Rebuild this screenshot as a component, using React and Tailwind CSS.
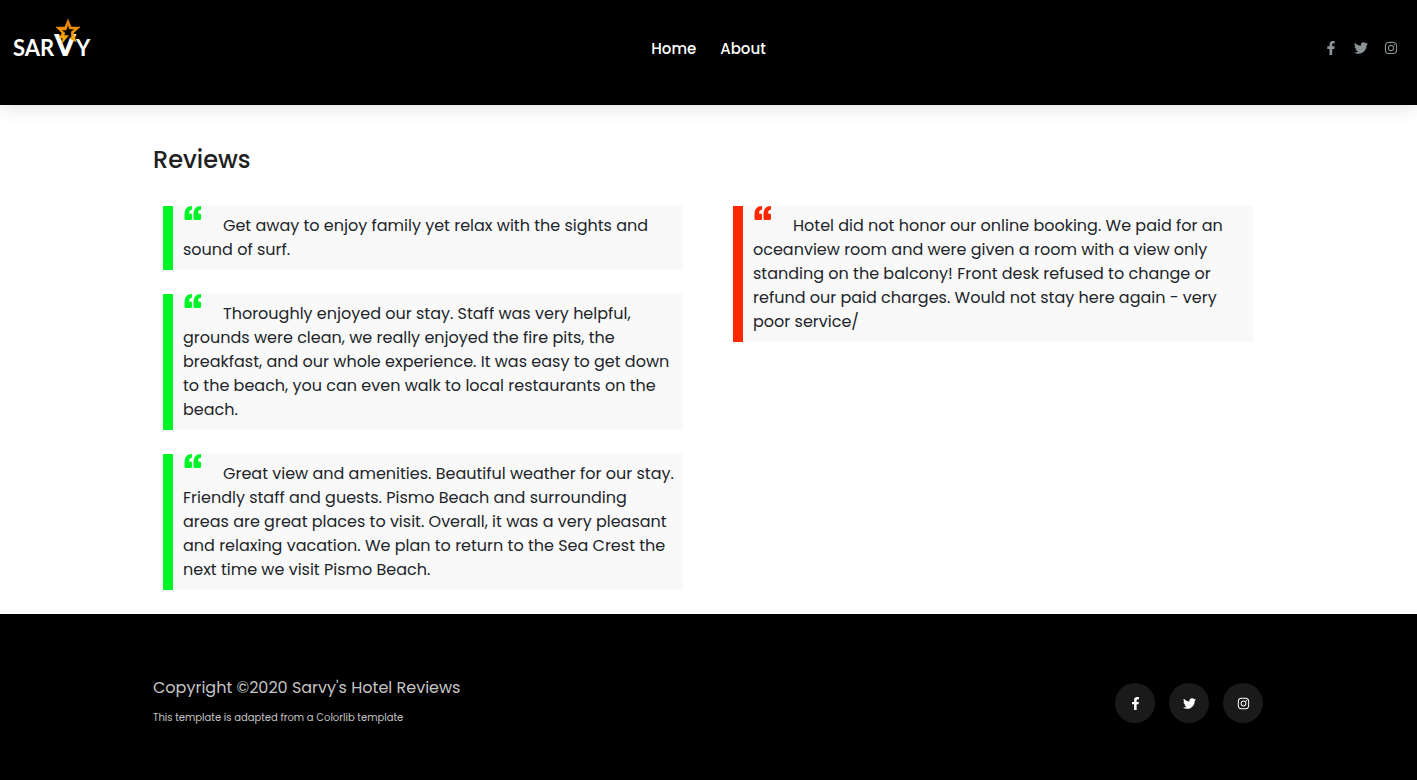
import React from "react";
import { FaFacebookF, FaTwitter, FaInstagram } from "react-icons/fa";

const good = [
  "Get away to enjoy family yet relax with the sights and sound of surf.",
  "Thoroughly enjoyed our stay. Staff was very helpful, grounds were clean, we really enjoyed the fire pits, the breakfast, and our whole experience. It was easy to get down to the beach, you can even walk to local restaurants on the beach.",
  "Great view and amenities. Beautiful weather for our stay. Friendly staff and guests. Pismo Beach and surrounding areas are great places to visit. Overall, it was a very pleasant and relaxing vacation. We plan to return to the Sea Crest the next time we visit Pismo Beach.",
];
const bad = [
  "Hotel did not honor our online booking. We paid for an oceanview room and were given a room with a view only standing on the balcony! Front desk refused to change or refund our paid charges. Would not stay here again - very poor service/",
];

const socials = [
  { name: "Facebook", Icon: FaFacebookF },
  { name: "Twitter", Icon: FaTwitter },
  { name: "Instagram", Icon: FaInstagram },
];

function Logo() {
  return (
    <svg width="84" height="60" viewBox="0 0 84 60" role="img" aria-label="Sarvy">
      <defs>
        <linearGradient id="star" x1="0" y1="0" x2="0" y2="1">
          <stop offset="0" stopColor="#e87a00" />
          <stop offset="1" stopColor="#ffb400" />
        </linearGradient>
      </defs>
      <text x="1" y="38" fill="#fff" fontFamily="Lato, sans-serif" fontSize="22" fontWeight="700">
        SAR<tspan fontSize="31" fontWeight="900">V</tspan>Y
      </text>
      <path d="M56 6l2 6h6l-5 4 2 6-5-3-4 3 1-6-4-4h5z" fill="#000" />
      <path
        d="M56 1l3.200 8H68l-6.500 6 2.500 9-6-4 1-1.500 1.500 1-1.500-5.500 3.500-3h-5L56 6.500 54.200 12H49.500l3.500 3-1 2.500h4.500L49.500 26l1.500-6h-3.500l2.500-5L44 9h8.800z"
        fill="url(#star)"
        stroke="url(#star)"
        strokeWidth="0.5"
      />
    </svg>
  );
}

function Quote({ text, tone }) {
  const border = tone === "good" ? "border-[#00f528]" : "border-[#ff2600]";
  const mark = tone === "good" ? "text-[#00f528]" : "text-[#ff2600]";
  return (
    <blockquote className={`relative mx-[10px] border-l-[10px] bg-[#f9f9f9] py-2 pl-[10px] pr-2 ${border}`}>
      <svg
        className={`absolute left-[11px] top-0 ${mark}`}
        width="18"
        height="14"
        viewBox="0 0 18 14"
        fill="currentColor"
        aria-hidden="true"
      >
        <path d="M8 0C3 0 .500 3 .500 9v3.500q0 1.500 1.500 1.500h4.500q1.500 0 1.500-1.500V9q0-1.500-1.500-1.500H5C5 5 6 4 8 3.800zM17 0c-5 0-7.500 3-7.500 9v3.500q0 1.500 1.500 1.500h4.500q1.500 0 1.500-1.500V9q0-1.500-1.500-1.500H14c0-2.500 1-3.500 3-3.700z" />
      </svg>
      <p className="indent-[40px] text-[16px] leading-6 text-[#212529]">{text}</p>
    </blockquote>
  );
}

export default function App() {
  return (
    <div className="min-h-screen bg-white font-['Poppins','Inter',sans-serif]">
      <header className="grid h-[105px] grid-cols-[1fr_auto_1fr] items-start bg-black px-3 shadow-[0_0_20px_rgba(0,0,0,0.15)]">
        <a href="#home" className="pt-[18px]">
          <Logo />
        </a>
        <nav className="flex gap-6 pt-[37px] text-[15px] font-medium leading-6 text-white">
          <a href="#home">Home</a>
          <a href="#about">About</a>
        </nav>
        <div className="flex justify-end gap-4 pr-[7px] pt-[41px] text-[#8c9396]">
          {socials.map(({ name, Icon }) => (
            <a key={name} href="#social" aria-label={name}>
              <Icon size={14} />
            </a>
          ))}
        </div>
      </header>

      <main className="mx-auto max-w-[1111px] pb-6 pr-px pt-[41px]">
        <h1 className="text-[24px] font-medium leading-7 text-[#212121]">Reviews</h1>
        <div className="mt-8 grid grid-cols-2 items-start gap-[30px]">
          <section aria-label="Positive reviews" className="flex flex-col gap-6">
            {good.map((t) => (
              <Quote key={t} text={t} tone="good" />
            ))}
          </section>
          <section aria-label="Negative reviews" className="flex flex-col gap-6">
            {bad.map((t) => (
              <Quote key={t} text={t} tone="bad" />
            ))}
          </section>
        </div>
      </main>

      <footer className="bg-black">
        <div className="mx-auto flex max-w-[1111px] items-start justify-between pb-14 pr-px pt-[61px] text-[#c4c4c4]">
          <div>
            <p className="text-[16px] leading-[26px]">Copyright ©2020 Sarvy's Hotel Reviews</p>
            <p className="mt-[7px] text-[10px] leading-5">This template is adapted from a Colorlib template</p>
          </div>
          <div className="flex gap-[14px] pt-2 text-white">
            {socials.map(({ name, Icon }) => (
              <a
                key={name}
                href="#social"
                aria-label={name}
                className="flex size-10 items-center justify-center rounded-full bg-[#1a1a1a]"
              >
                <Icon size={13} />
              </a>
            ))}
          </div>
        </div>
      </footer>
    </div>
  );
}
